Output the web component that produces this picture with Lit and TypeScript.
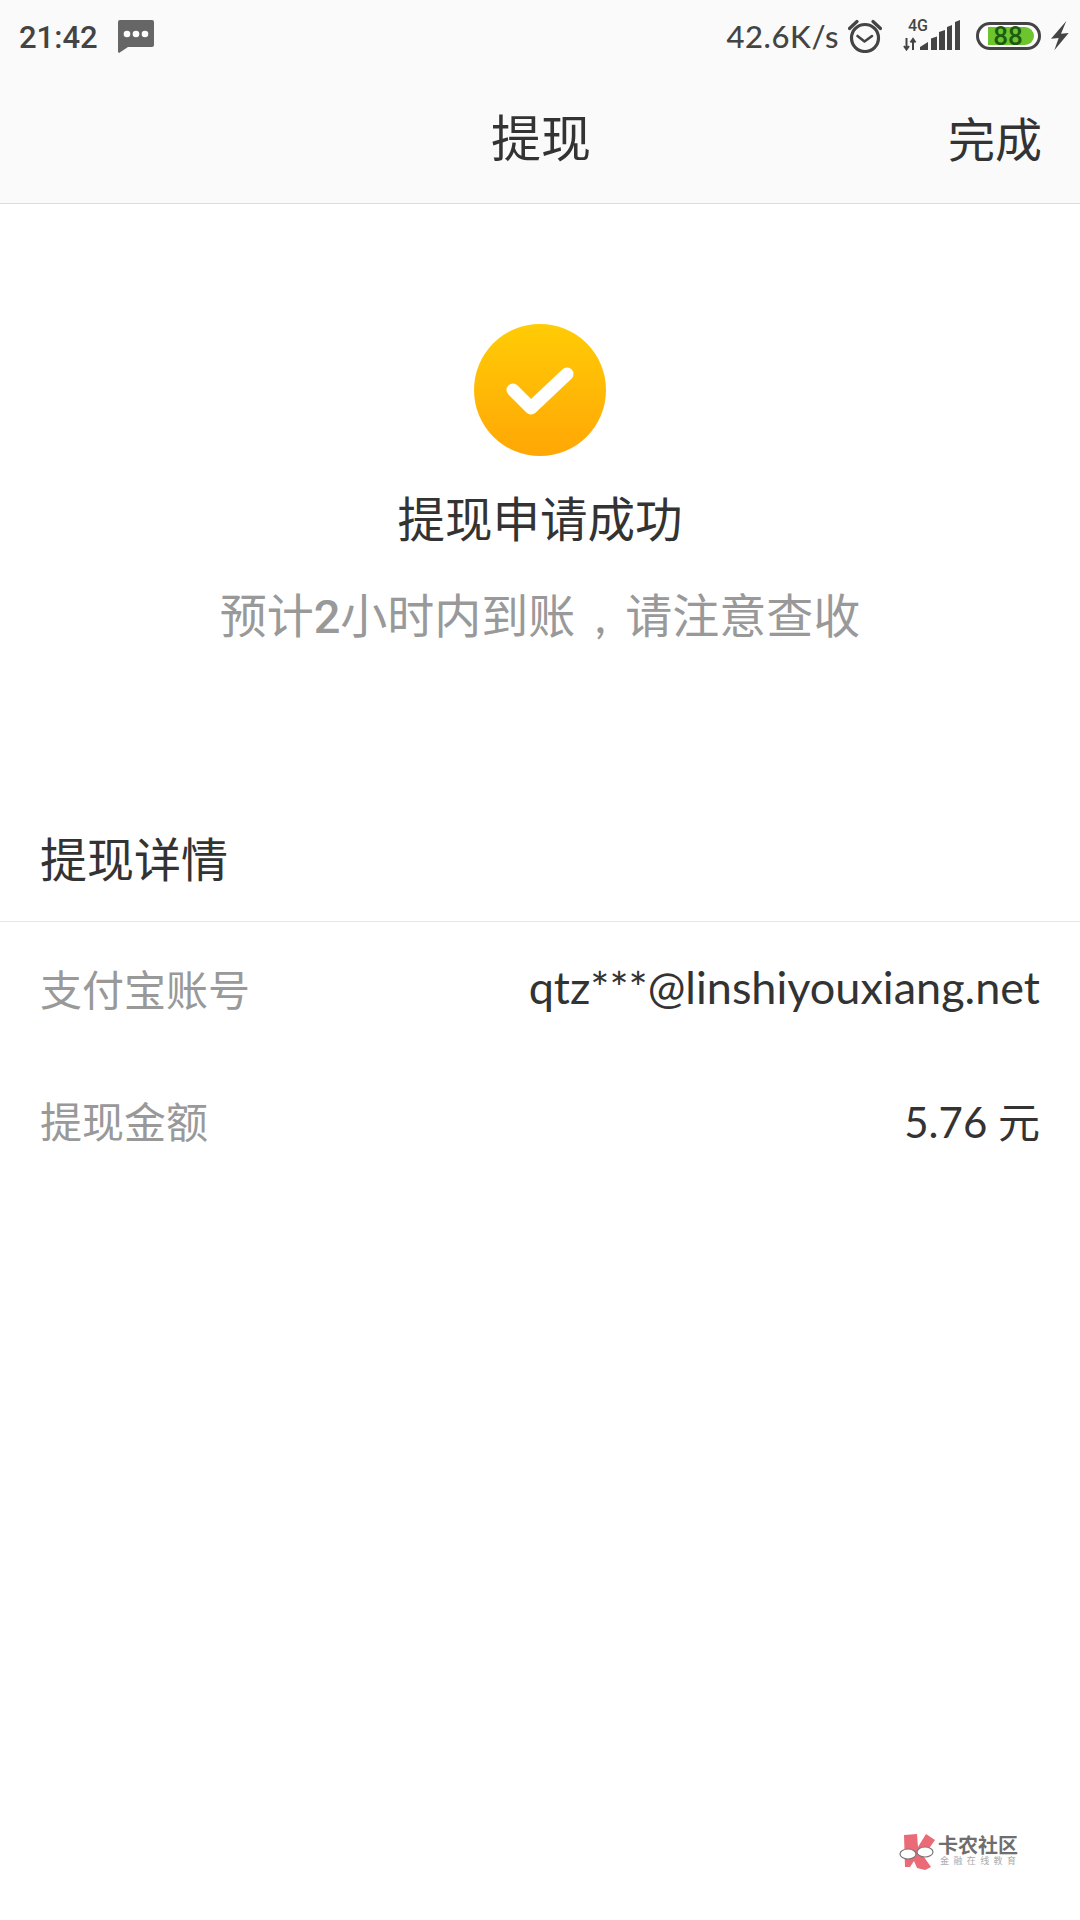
import { LitElement, css, html } from 'lit';
import { customElement } from 'lit/decorators.js';

@customElement('app-root')
export class AppRoot extends LitElement {
  static styles = css`
    :host {
      display: block;
      width: 1080px;
      height: 1920px;
      background: #fff;
      color: #333;
      font-family: "Lato", "Noto Sans CJK SC", sans-serif;
      position: relative;
      overflow: hidden;
    }

    .top {
      background: #fafafa;
      border-bottom: 1px solid #dcdcdc;
      height: 203px;
    }

    .status {
      height: 71px;
      display: flex;
      align-items: center;
      padding: 0 11px 0 19px;
      color: #444;
    }

    .time {
      font-size: 31px;
      font-weight: 500;
      font-family: "Roboto", sans-serif;
      margin: 3px 20px 0 0;
    }

    .msg {
      margin-top: 2px;
    }

    .spacer {
      flex: 1;
    }

    .speed {
      font-size: 31px;
      font-weight: 500;
      font-family: "Lato", sans-serif;
      letter-spacing: 0.6px;
      margin-right: 9px;
    }

    .alarm {
      margin-right: 21px;
    }

    .signal {
      margin: 0 15px 7px 0;
    }

    .battery {
      margin-right: 10px;
    }

    .nav {
      height: 128px;
      padding: 0 38px 6px 40px;
      display: grid;
      grid-template-columns: 1fr auto 1fr;
      align-items: center;
      font-size: 47px;
      color: #333;
    }

    .nav .done {
      justify-self: end;
      margin-top: 2px;
    }

    .nav .title {
      grid-column: 2;
      font-size: 50px;
    }

    .result {
      display: flex;
      flex-direction: column;
      align-items: center;
      padding-top: 120px;
    }

    .tick {
      width: 132px;
      height: 132px;
      display: block;
    }

    .result h1 {
      margin: 29px 0 0;
      font-size: 47.5px;
      font-weight: 400;
      line-height: 68px;
      color: #333;
    }

    .result p {
      margin: 28px 0 0;
      font-size: 47px;
      line-height: 68px;
      color: #999;
    }

    .result .num {
      font-family: "Roboto", sans-serif;
      font-weight: 500;
    }

    .result .comma {
      display: inline-block;
      width: 50px;
      text-align: center;
      font-weight: 500;
    }

    .section {
      margin-top: 160px;
      height: 110px;
      padding: 0 40px;
      font-size: 47px;
      line-height: 96px;
      border-bottom: 1px solid #e6e6e6;
      color: #333;
    }

    .row {
      display: flex;
      justify-content: space-between;
      align-items: center;
      padding: 0 40px 2px;
      height: 130px;
      font-size: 42px;
    }

    .row .label {
      color: #999;
    }

    .row .value {
      color: #333;
    }

    .row .mail {
      font-size: 45px;
    }

    .mark {
      position: absolute;
      left: 895px;
      top: 1825px;
      display: flex;
      gap: 1px;
    }

    .mark .text {
      margin-top: 10px;
    }

    .mark .name {
      font-size: 20px;
      line-height: 20px;
      font-weight: 700;
      color: #6e6e6e;
    }

    .mark .sub {
      font-size: 9px;
      line-height: 12px;
      letter-spacing: 4.4px;
      margin-left: 2px;
      white-space: nowrap;
      color: #aaa;
    }
  `;

  render() {
    return html`
      <div class="top">
        <div class="status">
          <span class="time">21:42</span>
          <svg class="msg" width="36" height="33" viewBox="0 0 36 33">
            <path d="M2 0h32a2 2 0 0 1 2 2v23a2 2 0 0 1-2 2H10l-9 6-1-1V2a2 2 0 0 1 2-2z" fill="#666"/>
            <circle cx="9" cy="14" r="3.300" fill="#fff"/>
            <circle cx="18" cy="14" r="3.300" fill="#fff"/>
            <circle cx="27" cy="14" r="3.300" fill="#fff"/>
          </svg>
          <span class="spacer"></span>
          <span class="speed">42.6K/s</span>
          <svg class="alarm" width="34" height="34" viewBox="0 0 34 34" fill="none" stroke="#444" stroke-width="3.200">
            <circle cx="17" cy="19" r="13.500"/>
            <path d="M9.500 17l7 5.500 7.500-5.500" stroke-width="2.600" stroke-linecap="round" stroke-linejoin="round"/>
            <path d="M1.500 9.500L9 2.500M32.500 9.500L25 2.500" stroke-linecap="round"/>
          </svg>
          <svg class="signal" width="58" height="38" viewBox="0 -5 58 38" fill="#444">
            <path d="M3.500 20v11M1 28l2.500 3.500L6 28M10 32V21M7.500 24.500L10 21l2.500 3.500" stroke="#444" stroke-width="2" fill="none"/>
            <path d="M17 32v-3l8-5v8zM28 32V20.500l6-2V32zM36 32V14l6-2v20zM44 32V9l5-2v25zM52 32V4l5-2v30z"/>
            <text x="5" y="12.500" font-family="Roboto, sans-serif" font-size="16" font-weight="500">4G</text>
          </svg>
          <svg class="battery" width="65" height="28" viewBox="0 0 65 28">
            <rect x="1.500" y="1.500" width="62" height="25" rx="12.500" fill="#fff" stroke="#444" stroke-width="3"/>
            <path d="M12 5h37a9 9 0 0 1 0 18H12z" fill="#6cc52d"/>
            <text x="32" y="23" text-anchor="middle" font-family="Roboto, sans-serif" font-size="26" font-weight="500" fill="#1d5a12">88</text>
          </svg>
          <svg width="18" height="30" viewBox="0 0 18 30">
            <path d="M15.300 0L0 17.700l7.700-.7-4.400 12.300L17.700 12l-7.700.7z" fill="#444"/>
          </svg>
        </div>
        <div class="nav">
          <span class="title">提现</span>
          <span class="done">完成</span>
        </div>
      </div>

      <div class="result">
        <svg class="tick" viewBox="0 0 132 132">
          <defs>
            <linearGradient id="g" x1="0" y1="0" x2="0" y2="1">
              <stop offset="0" stop-color="#ffcc05"/>
              <stop offset="1" stop-color="#ffa705"/>
            </linearGradient>
          </defs>
          <circle cx="66" cy="66" r="66" fill="url(#g)"/>
          <path d="M39 66l18 18 36-34" fill="none" stroke="#fff" stroke-width="13" stroke-linecap="round" stroke-linejoin="round"/>
        </svg>
        <h1>提现申请成功</h1>
        <p>预计<span class="num">2</span>小时内到账<span class="comma">,</span>请注意查收</p>
      </div>

      <div class="section">提现详情</div>
      <div class="row">
        <span class="label">支付宝账号</span>
        <span class="value mail">qtz***@linshiyouxiang.net</span>
      </div>
      <div class="row">
        <span class="label">提现金额</span>
        <span class="value">5.76 元</span>
      </div>

      <div class="mark">
        <svg width="42" height="50" viewBox="0 0 42 50">
          <path d="M9 10l13-1 1 13 8-13 9 6-7 10-4 7 7 10-6 3-8-2-3-7-4 6-5 0z" fill="#ea6a78"/>
          <ellipse cx="13" cy="29" rx="8" ry="5" fill="#fff" stroke="#777" stroke-width="1.200"/>
          <ellipse cx="30" cy="27" rx="8" ry="5" fill="#fff" stroke="#777" stroke-width="1.200"/>
        </svg>
        <div class="text">
          <div class="name">卡农社区</div>
          <div class="sub">金融在线教育</div>
        </div>
      </div>
    `;
  }
}
